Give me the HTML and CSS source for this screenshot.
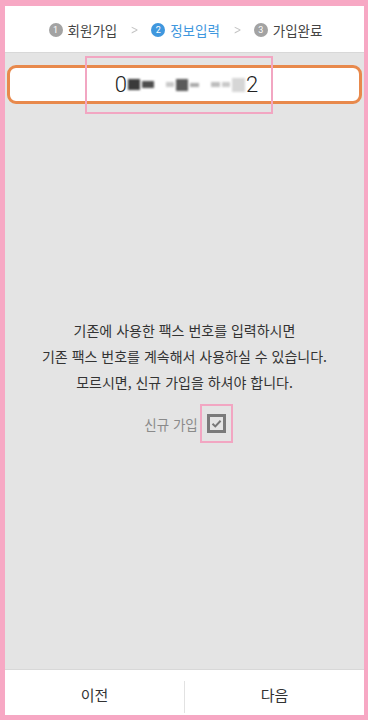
FILE: index.html
```html
<!DOCTYPE html>
<html lang="ko">
<head>
<meta charset="utf-8">
<link rel="stylesheet" href="styles.css">
</head>
<body>
<div class="frame">
  <div class="app">
    <header class="steps">
      <div class="step"><span class="num">1</span><span class="label">회원가입</span></div>
      <span class="chev">&gt;</span>
      <div class="step active"><span class="num">2</span><span class="label">정보입력</span></div>
      <span class="chev">&gt;</span>
      <div class="step"><span class="num">3</span><span class="label">가입완료</span></div>
    </header>
    <main class="main">
      <div class="field">
        <div class="phone">
          <span class="d">0</span>
          <span class="px p1"></span><span class="px p2"></span>
          <span class="gap"></span>
          <span class="px p3"></span><span class="px p4"></span><span class="px p5"></span>
          <span class="gap"></span>
          <span class="px p6"></span><span class="px p3"></span><span class="px p7"></span>
          <span class="d">2</span>
        </div>
        <div class="highlight"></div>
      </div>
      <div class="message">
        <p>기존에 사용한 팩스 번호를 입력하시면</p>
        <p>기존 팩스 번호를 계속해서 사용하실 수 있습니다.</p>
        <p>모르시면, 신규 가입을 하셔야 합니다.</p>
      </div>
      <div class="newjoin">
        <span class="nj-label">신규 가입</span>
        <span class="cb-wrap">
          <span class="cb">
            <svg width="13" height="13" viewBox="0 0 13 13"><path d="M2.5 6.8 L5.3 9.4 L10.6 3.8" fill="none" stroke="#777" stroke-width="2"/></svg>
          </span>
        </span>
      </div>
    </main>
    <footer class="footer">
      <button class="btn">이전</button>
      <span class="divider"></span>
      <button class="btn">다음</button>
    </footer>
  </div>
</div>
</body>
</html>
```
FILE: styles.css
```css
* { box-sizing: border-box; }
html, body { margin: 0; padding: 0; }
body {
  background: #f7a8c4;
  font-family: "Noto Sans CJK KR", "Noto Sans", sans-serif;
  width: 368px;
  height: 720px;
  overflow: hidden;
}
.frame {
  padding: 6px 4px 5px 5px;
  height: 720px;
}
.app {
  height: 709px;
  display: flex;
  flex-direction: column;
  background: #e4e4e4;
}
.steps {
  height: 47px;
  background: #fff;
  border-bottom: 1px solid #d8d8d8;
  display: flex;
  align-items: center;
  justify-content: center;
  padding-left: 2px;
  padding-top: 1px;
}
.step {
  display: flex;
  align-items: center;
  gap: 5px;
  color: #444;
  font-size: 13.5px;
}
.num {
  width: 14px;
  height: 14px;
  border-radius: 50%;
  background: #a3a3a3;
  color: #fff;
  font-size: 9px;
  line-height: 14px;
  text-align: center;
  font-family: "Roboto", sans-serif;
}
.step.active { color: #3f97de; }
.step.active .num { background: #3f97de; }
.chev {
  color: #c4c4c4;
  font-size: 13px;
  margin: 0 11px 0 12px;
  font-family: "DejaVu Sans", sans-serif;
  transform: scaleX(0.7);
}
.main {
  flex: 1;
  display: flex;
  flex-direction: column;
  align-items: center;
  padding: 12px 2px 0 2px;
}
.field {
  position: relative;
  width: 100%;
}
.phone {
  height: 39px;
  background: #fff;
  border: 3px solid #e8894c;
  border-radius: 9px;
  display: flex;
  align-items: center;
  justify-content: center;
  padding-left: 4px;
}
.d {
  font-family: "Roboto", sans-serif;
  font-weight: 300;
  font-size: 22px;
  color: #222;
  line-height: 1;
}
.px {
  display: inline-block;
  width: 12px;
  height: 10px;
  margin: 0 1px;
  filter: blur(1px);
}
.gap { display: inline-block; width: 10px; }
.p1 { background: #3a3a3a; height: 11px; }
.p2 { background: #4d4d4d; height: 7px; }
.p3 { background: #c9c9c9; height: 5px; width: 8px; }
.p4 { background: #5a5a5a; height: 12px; }
.p5 { background: #aaaaaa; height: 4px; width: 9px; }
.p6 { background: #bdbdbd; height: 5px; width: 9px; }
.p7 { background: #d6d6d6; height: 14px; width: 13px; }
.highlight {
  position: absolute;
  left: 78px;
  top: -9px;
  width: 188px;
  height: 58px;
  border: 2px solid #f2a6c2;
  pointer-events: none;
}
.message {
  margin-top: 213px;
  text-align: center;
  color: #333;
  font-size: 14px;
}
.message p {
  margin: 0;
  line-height: 26px;
}
.newjoin {
  margin-top: 9px;
  display: flex;
  align-items: center;
  margin-left: 8px;
}
.nj-label {
  color: #8a8a8a;
  font-size: 13.5px;
}
.cb-wrap {
  margin-left: 2px;
  width: 33px;
  height: 39px;
  border: 2px solid #f2a6c2;
  display: flex;
  align-items: center;
  justify-content: center;
}
.cb {
  width: 19px;
  height: 19px;
  border: 3px solid #7a7a7a;
  display: flex;
  align-items: center;
  justify-content: center;
  background: #e4e4e4;
}
.footer {
  height: 46px;
  background: #fff;
  border-top: 1px solid #d8d8d8;
  display: flex;
  align-items: center;
}
.btn {
  flex: 1;
  height: 100%;
  border: none;
  background: transparent;
  font-family: "Noto Sans CJK KR", sans-serif;
  font-size: 15px;
  color: #333;
  padding: 0;
  padding-top: 4px;
}
.divider {
  width: 1px;
  height: 32px;
  background: #e2e2e2;
  margin-top: 8px;
}
```
